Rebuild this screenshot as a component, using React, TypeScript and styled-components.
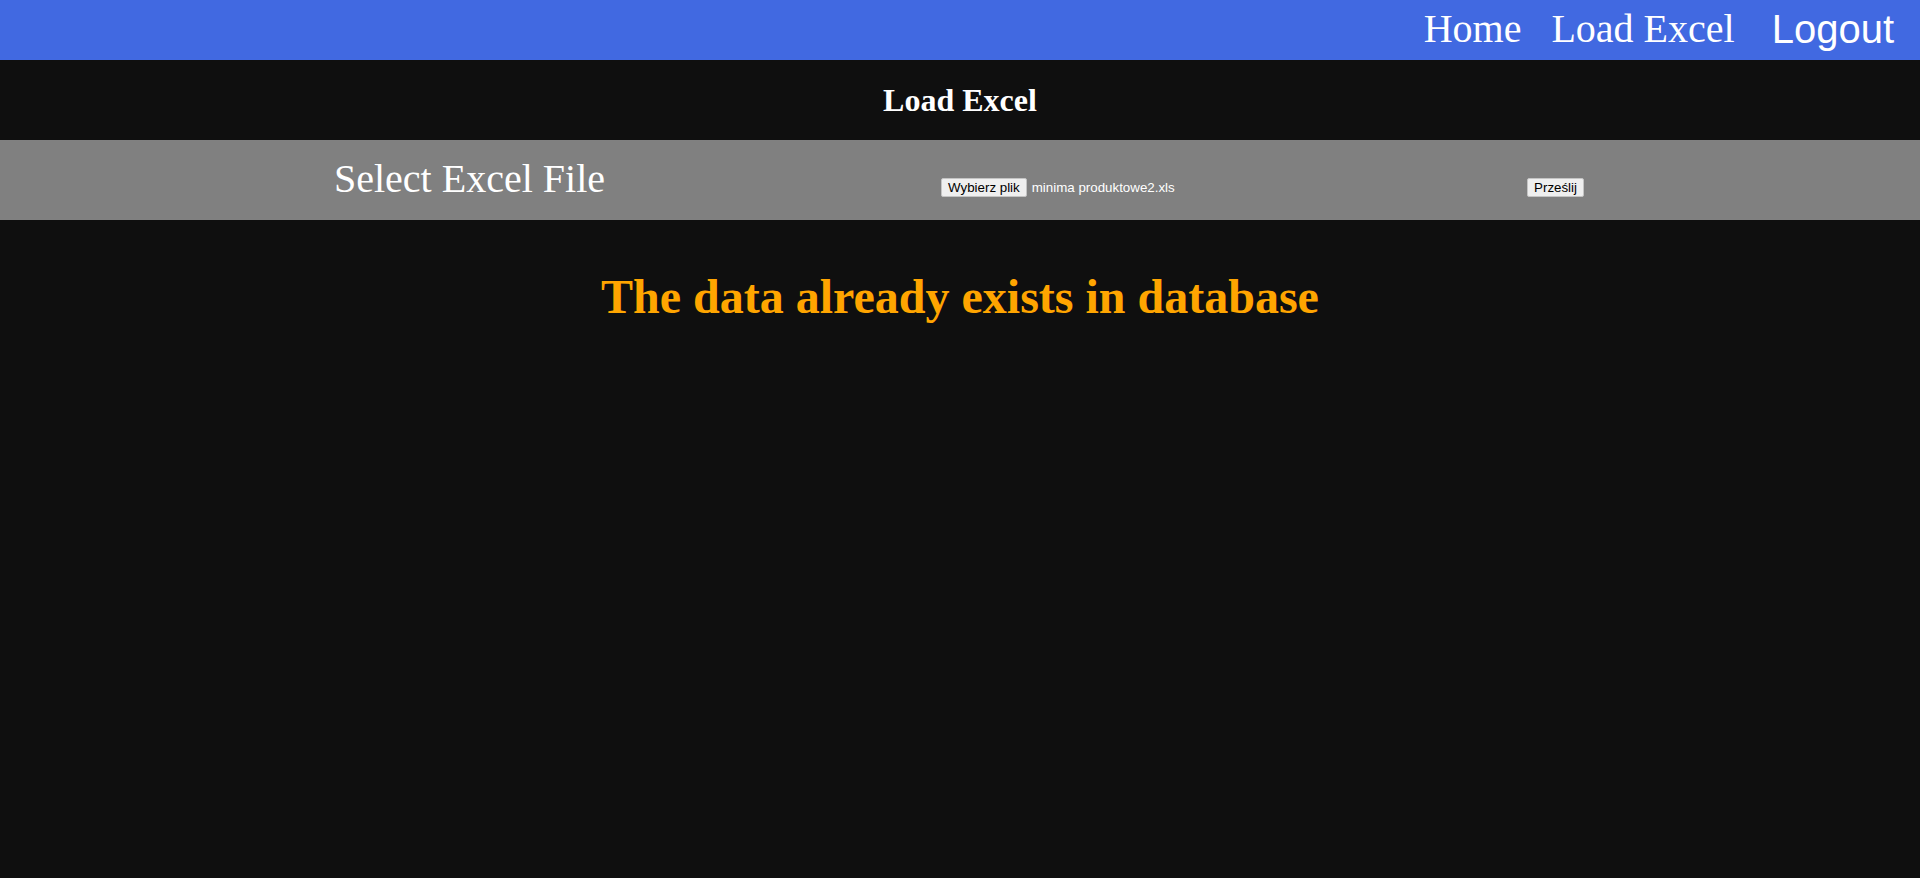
import React from "react";
import styled, { createGlobalStyle } from "styled-components";

const GlobalStyle = createGlobalStyle`
  html, body {
    margin: 0;
    padding: 0;
    background: #0f0f0f;
    font-family: "Liberation Serif", "Times New Roman", serif;
  }
  #root { min-height: 878px; background: #0f0f0f; }
`;

const NavBar = styled.nav`
  height: 60px;
  background: #4169e1;
  display: flex;
  justify-content: flex-end;
  align-items: center;
  padding-right: 26px;
  box-sizing: border-box;
`;

const NavLink = styled.a<{ $gap?: number }>`
  color: #ffffff;
  font-family: "Liberation Serif", "Times New Roman", serif;
  font-size: 40px;
  line-height: 46px;
  text-decoration: none;
  margin-left: ${(p) => p.$gap ?? 0}px;
  margin-top: -2px;
  cursor: pointer;
`;

const LogoutButton = styled.a<{ $gap?: number }>`
  color: #ffffff;
  font-family: "Liberation Sans", Arial, sans-serif;
  font-size: 40px;
  line-height: 46px;
  margin-left: ${(p) => p.$gap ?? 0}px;
  margin-top: -3px;
  cursor: pointer;
`;

const TitleBand = styled.header`
  height: 80px;
  display: flex;
  align-items: center;
  justify-content: center;
`;

const Title = styled.h1`
  margin: 0;
  color: #ffffff;
  font-family: "Liberation Serif", "Times New Roman", serif;
  font-weight: bold;
  font-size: 32px;
  line-height: 37px;
`;

const UploadBand = styled.section`
  height: 80px;
  background: #808080;
  box-sizing: border-box;
  padding-top: 16px;
`;

const UploadForm = styled.form`
  width: 65%;
  margin: 0 auto;
  display: flex;
  justify-content: space-between;
  align-items: baseline;
`;

const Label = styled.label`
  color: #ffffff;
  font-family: "Liberation Serif", "Times New Roman", serif;
  font-size: 40px;
  line-height: 46px;
  margin-left: -2px;
`;

const FilePicker = styled.div`
  width: 250px;
  display: flex;
  align-items: baseline;
  gap: 5px;
`;

const NativeButton = styled.button`
  font-family: "Liberation Sans", Arial, sans-serif;
  font-size: 13.333px;
  line-height: 15px;
  color: #000000;
  background: #efefef;
  border: 1px solid #c4c4c4;
  border-radius: 2px;
  padding: 1px 6px;
  margin: 0;
  height: 19px;
  box-sizing: border-box;
  cursor: pointer;
`;

const FileName = styled.span`
  font-family: "Liberation Sans", Arial, sans-serif;
  font-size: 13.333px;
  color: #ffffff;
  white-space: nowrap;
`;

const Message = styled.h2`
  margin: 49px 0 0;
  text-align: center;
  color: #ffa500;
  font-family: "Liberation Serif", "Times New Roman", serif;
  font-weight: bold;
  font-size: 48px;
  line-height: 55px;
`;

export default function App() {
  return (
    <>
      <GlobalStyle />
      <NavBar>
        <NavLink>Home</NavLink>
        <NavLink $gap={30}>Load Excel</NavLink>
        <LogoutButton $gap={37}>Logout</LogoutButton>
      </NavBar>
      <TitleBand>
        <Title>Load Excel</Title>
      </TitleBand>
      <UploadBand>
        <UploadForm onSubmit={(e) => e.preventDefault()}>
          <Label>Select Excel File</Label>
          <FilePicker>
            <NativeButton type="button">Wybierz plik</NativeButton>
            <FileName>minima produktowe2.xls</FileName>
          </FilePicker>
          <NativeButton type="submit">Prześlij</NativeButton>
        </UploadForm>
      </UploadBand>
      <Message>The data already exists in database</Message>
    </>
  );
}
